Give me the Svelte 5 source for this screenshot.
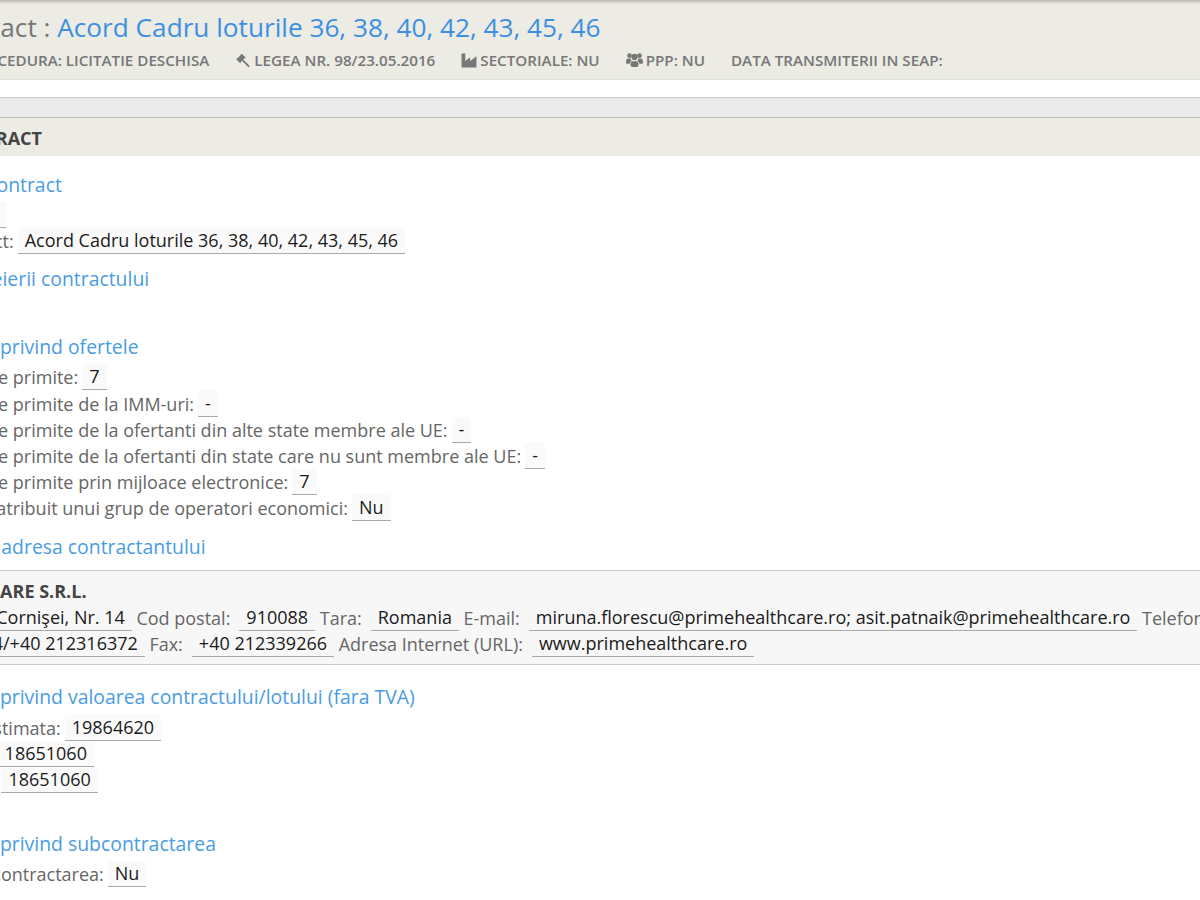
<script lang="ts">
  const offerRows = [
    { label: 'Numar oferte primite:', value: '7', cls: '' },
    { label: 'Numar oferte primite de la IMM-uri:', value: '-', cls: '' },
    { label: 'Numar oferte primite de la ofertanti din alte state membre ale UE:', value: '-', cls: '' },
    { label: 'Numar oferte primite de la ofertanti din state care nu sunt membre ale UE:', value: '-', cls: '' },
    { label: 'Numar oferte primite prin mijloace electronice:', value: '7', cls: '' },
    { label: 'Contractul atribuit unui grup de operatori economici:', value: 'Nu', cls: 'in10' }
  ];
</script>

<div class="page">
  <header class="top">
    <h1><span class="muted">Denumire contract :</span> <span class="blue">Acord Cadru loturile 36, 38, 40, 42, 43, 45, 46</span></h1>
    <div class="meta">
      <span class="meta-item">TIP PROCEDURA: LICITATIE DESCHISA</span>
      <span class="meta-item">
        <svg width="16" height="15" viewBox="0 0 15 14"><path fill="#777" d="M6.2.6 10 4.300 9 5.300 8.700 5 7.700 6 13.800 12.200 12.600 13.400 6.500 7.200 5.500 8.200 5.800 8.500 4.800 9.500 1 5.700 2 4.700 2.300 5 5.500 1.800 5.200 1.500Z"/></svg>
        LEGEA NR. 98/23.05.2016
      </span>
      <span class="meta-item">
        <svg width="16" height="16" viewBox="0 0 15 14"><path fill="#777" d="M.5 1H4V8L8.500 4.500V8L14.500 3.500V14H.5Z"/></svg>
        SECTORIALE: NU
      </span>
      <span class="meta-item">
        <svg width="17" height="14" viewBox="0 0 16 13"><g fill="#777"><circle cx="3.300" cy="2.400" r="2.200"/><circle cx="12.700" cy="2.400" r="2.200"/><circle cx="8" cy="3.600" r="2.900"/><path d="M0 8.300C0 6 1 5 2.300 5H4.500C4.300 6.500 5 7.300 5.500 7.700 4.300 8 3.500 9 3.300 10H1C.3 10 0 9.400 0 8.300ZM16 8.300C16 6 15 5 13.700 5H11.500C11.700 6.500 11 7.300 10.500 7.700 11.700 8 12.500 9 12.700 10H15C15.700 10 16 9.400 16 8.300ZM4.200 11C4.200 8.800 5 7.700 6.200 7.700H9.800C11 7.700 11.800 8.800 11.800 11 11.800 12.300 11 13 10 13H6C5 13 4.200 12.300 4.200 11Z"/></g></svg>
        PPP: NU
      </span>
      <span class="meta-item">DATA TRANSMITERII IN SEAP:</span>
    </div>
  </header>

  <div class="gap"></div>
  <div class="band"></div>
  <div class="section-title">DATE CONTRACT</div>

  <main class="body">
    <h2 class="first">Numar contract</h2>
    <div class="row"><span>Numar:</span><span class="v">000</span></div>
    <div class="row"><span>Titlul contract:</span><span class="v">Acord Cadru loturile 36, 38, 40, 42, 43, 45, 46</span></div>
    <h2 class="after-row">Data incheierii contractului</h2>

    <h2 class="after-head">Informatii privind ofertele</h2>
    {#each offerRows as r}
      <div class="row"><span class={r.cls}>{r.label}</span><span class="v">{r.value}</span></div>
    {/each}

    <h2 class="after-row">Numele si adresa contractantului</h2>
    <section class="contractor">
      <div class="name">HEALTHCARE S.R.L.</div>
      <div class="row">
        <span>Adresa:</span><span class="u lead">Str. Cornişei, Nr. 14</span>
        <span>Cod postal:</span><span class="u">910088</span>
        <span>Tara:</span><span class="u">Romania</span>
        <span>E-mail:</span><span class="u">miruna.florescu@primehealthcare.ro; asit.patnaik@primehealthcare.ro</span>
        <span>Telefon:</span>
      </div>
      <div class="row">
        <span class="u wrap">212316374/+40 212316372</span>
        <span>Fax:</span><span class="u">+40 212339266</span>
        <span>Adresa Internet (URL):</span><span class="u">www.primehealthcare.ro</span>
      </div>
    </section>

    <h2 class="after-block">Informatii privind valoarea contractului/lotului (fara TVA)</h2>
    <div class="row"><span class="in11">Valoarea estimata:</span><span class="v">19864620</span></div>
    <div class="row"><span class="in4">Oferta min:</span><span class="v">18651060</span></div>
    <div class="row"><span class="in4">Oferta max:</span><span class="v">18651060</span></div>

    <h2 class="after-value">Informatii privind subcontractarea</h2>
    <div class="row"><span class="in14">Exista subcontractarea:</span><span class="v">Nu</span></div>
  </main>
</div>

<style>
  :global(body) {
    margin: 0;
    background: #fff;
    overflow: hidden;
    font-family: "Open Sans", sans-serif;
  }

  .page {
    width: 1200px;
    height: 900px;
    overflow: hidden;
  }

  .top {
    background: linear-gradient(#b9b8b2, #dfded8 3px, #ecebe4 5px);
    border-bottom: 1px solid #e2e2dc;
    height: 79px;
    white-space: nowrap;
  }

  h1 {
    margin: 0 0 0 -193px;
    padding-top: 10px;
    font-size: 26.200px;
    line-height: 34px;
    font-weight: 400;
  }

  .muted { color: #777; }
  .blue { color: #3d8fe0; }

  .meta {
    display: flex;
    gap: 26px;
    margin-left: -60px;
    margin-top: 6px;
    font-size: 15.200px;
    line-height: 20px;
    font-weight: 600;
    color: #777;
  }

  .meta-item {
    display: flex;
    align-items: center;
    gap: 3px;
  }

  .gap { height: 17px; }

  .band {
    height: 19px;
    background: #ebebeb;
    border-top: 1px solid #c8c8c8;
    border-bottom: 1px solid #bdbdbd;
  }

  .section-title {
    height: 38px;
    line-height: 41px;
    background: #ecebe4;
    font-size: 18px;
    font-weight: 700;
    color: #444;
    margin-left: -106px;
    white-space: nowrap;
  }

  .body {
    margin-left: -106px;
    width: 1420px;
    padding-top: 15px;
    white-space: nowrap;
  }

  h2 {
    margin: 0 0 0 12px;
    padding-bottom: 3px;
    font-size: 19.400px;
    line-height: 28px;
    font-weight: 400;
    color: #4a9ce2;
  }

  h2.first { margin-left: 25px; }
  h2.after-row { margin-top: 11px; }
  h2.after-head { margin-top: 37px; }
  h2.after-block { margin-top: 18px; padding-bottom: 4px; }
  h2.after-value { margin-top: 37px; padding-bottom: 3px; }

  .row {
    display: flex;
    align-items: center;
    height: 26.200px;
    font-size: 18px;
    color: #666;
  }

  .in4 { margin-left: 4px; }
  .in10 { margin-left: 10px; }
  .in11 { margin-left: 11px; }
  .in14 { margin-left: 14px; }

  .v, .u {
    color: #1a1a1a;
    border-bottom: 1px solid #aaa;
    line-height: 25px;
    padding: 0 7px;
  }

  .v {
    background: #fafafa;
    margin-left: 4px;
  }

  .u {
    margin-left: 9px;
    margin-right: 4.600px;
  }

  .u.lead { margin-left: -1px; }
  .u.wrap { margin-left: 9.400px; }

  .contractor {
    margin-top: 6px;
    height: 95px;
    padding-top: 6px;
    box-sizing: border-box;
    background: #f7f7f7;
    border-top: 1px solid #c9c9c9;
    border-bottom: 1px solid #c9c9c9;
  }

  .name {
    margin-left: 24px;
    font-size: 18px;
    font-weight: 700;
    line-height: 28px;
    color: #444;
  }
</style>
